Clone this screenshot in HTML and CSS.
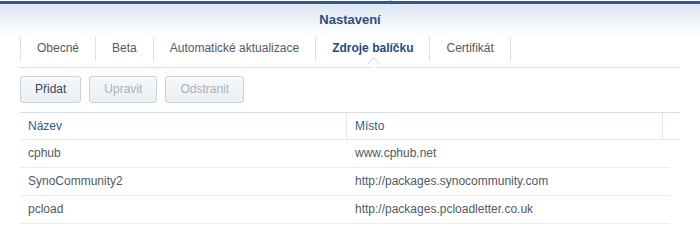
FILE: index.html
```html
<!DOCTYPE html>
<html lang="cs">
<head>
    <meta charset="UTF-8">
    <meta name="viewport" content="width=device-width, initial-scale=1.0">
    <title>Nastavení</title>
    <link rel="stylesheet" href="styles.css">
</head>
<body>
    <div class="strip"><span>Centrum balíčků</span></div>
    <div class="bluebar"></div>
    <div class="header">Nastavení</div>

    <div class="content">
        <div class="tabs">
            <div class="tab">Obecné</div>
            <div class="tab">Beta</div>
            <div class="tab">Automatické aktualizace</div>
            <div class="tab active">Zdroje balíčku</div>
            <div class="tab">Certifikát</div>
        </div>

        <div class="toolbar">
            <div class="btn">Přidat</div>
            <div class="btn disabled">Upravit</div>
            <div class="btn disabled">Odstranit</div>
        </div>

        <div class="grid">
            <div class="grid-head">
                <div class="cell col-name">Název</div>
                <div class="cell col-loc">Místo</div>
                <div class="cell col-pad"></div>
            </div>
            <div class="grid-body">
                <div class="row">
                    <div class="cell col-name">cphub</div>
                    <div class="cell col-loc">www.cphub.net</div>
                </div>
                <div class="row">
                    <div class="cell col-name">SynoCommunity2</div>
                    <div class="cell col-loc">http://packages.synocommunity.com</div>
                </div>
                <div class="row">
                    <div class="cell col-name">pcload</div>
                    <div class="cell col-loc">http://packages.pcloadletter.co.uk</div>
                </div>
            </div>
        </div>
    </div>
</body>
</html>
```

FILE: styles.css
```css
body {
    margin: 0;
    background-color: #ffffff;
    font-family: "Liberation Sans", Arial, sans-serif;
    font-size: 12px;
    color: #505a64;
    overflow: hidden;
}
.strip {
    height: 1px;
    overflow: hidden;
    text-align: center;
    font-size: 12px;
    line-height: 12px;
    color: #9aa0a6;
}
.strip span {
    display: inline-block;
    margin-top: -10px;
}
.bluebar {
    height: 3px;
    background-color: #2d5a8e;
}
.header {
    height: 33px;
    line-height: 31px;
    text-align: center;
    font-size: 13px;
    font-weight: bold;
    color: #2c4f85;
    background: linear-gradient(to bottom, #dce6f1, #ffffff);
}
.content {
    padding: 0 20px;
}
.tabs {
    display: flex;
    height: 30px;
    border-bottom: 1px solid #dadee3;
    position: relative;
}
.tab {
    height: 24px;
    line-height: 23px;
    padding: 0 16px;
    border-left: 1px solid #d9e1e9;
    color: #505a64;
    font-size: 12px;
}
.tab:last-child {
    border-right: 1px solid #d9e1e9;
}
.tab.active {
    font-weight: bold;
    color: #1f4b82;
    position: relative;
}
.tab.active::after {
    content: "";
    position: absolute;
    left: 50%;
    bottom: -7px;
    width: 8px;
    height: 8px;
    margin-left: -4px;
    background-color: #ffffff;
    border-left: 1px solid #dadee3;
    border-top: 1px solid #dadee3;
    transform: rotate(45deg);
}
.toolbar {
    display: flex;
    gap: 8px;
    padding-top: 8px;
}
.btn {
    height: 25px;
    line-height: 25px;
    padding: 0 14px;
    border: 1px solid #c9d3dd;
    border-radius: 3px;
    background: linear-gradient(to bottom, #f7f9fb, #eaeff4);
    color: #3c4650;
}
.btn.disabled {
    color: #a9b1ba;
}
.grid {
    margin-top: 9px;
}
.grid-head {
    display: flex;
    height: 26px;
    border-top: 1px solid #d3e0ec;
    border-bottom: 1px solid #e6eaee;
    color: #2e5b95;
}
.grid-head .cell {
    line-height: 26px;
}
.cell {
    padding-left: 8px;
    box-sizing: border-box;
}
.col-name {
    width: 326px;
}
.col-loc {
    width: 317px;
}
.grid-head .col-loc {
    border-left: 1px solid #e1e8ef;
    border-right: 1px solid #e1e8ef;
}
.col-pad {
    flex: 1;
}
.grid-body {
    width: 650px;
}
.row {
    display: flex;
    height: 27px;
    line-height: 27px;
    border-bottom: 1px solid #ebedef;
}
.row .col-loc {
    padding-left: 9px;
}
```
